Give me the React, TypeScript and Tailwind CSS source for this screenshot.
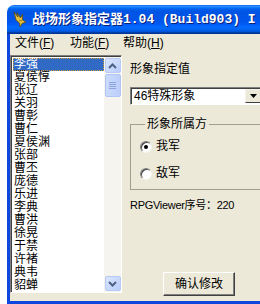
import React from "react";

const names = [
  "李强", "夏侯惇", "张辽", "关羽", "曹彰", "曹仁", "夏侯渊", "张部", "曹丕",
  "庞德", "乐进", "李典", "曹洪", "徐晃", "于禁", "许褚", "典韦", "貂蝉",
];

const ui = "font-['Liberation_Sans','Noto_Sans_CJK_SC',sans-serif]";

function Chevron({ down }: { down?: boolean }) {
  return (
    <svg width="9" height="6" viewBox="0 0 9 6">
      <polyline
        points={down ? "1,1 4.5,4.5 8,1" : "1,5 4.5,1.5 8,5"}
        fill="none"
        stroke="#4d6185"
        strokeWidth="2"
      />
    </svg>
  );
}

function Radio({ checked, label }: { checked?: boolean; label: string }) {
  return (
    <div className="flex items-center h-[13px]">
      <span className="w-[12px] h-[12px] rounded-full bg-white border border-t-[#7f7f7f] border-l-[#7f7f7f] border-r-[#f4f3ee] border-b-[#f4f3ee] shadow-[inset_1px_1px_0_#404040] flex items-center justify-center">
        {checked && <span className="w-[4px] h-[4px] rounded-full bg-black" />}
      </span>
      <span className="ml-[4px] text-[12px] leading-[13px] text-black">{label}</span>
    </div>
  );
}

export default function App() {
  return (
    <div className={`w-[260px] h-[304px] bg-white overflow-hidden ${ui}`}>
      <div className="ml-[7px] mt-[5px] w-[300px] flex flex-col">
        {/* title bar */}
        <div className="h-[29px] rounded-t-[7px] flex items-center pl-[6px] bg-[linear-gradient(#0058ee_0%,#3593ff_4%,#288eff_6%,#127dff_8%,#036ffc_10%,#0262ee_14%,#0057e5_20%,#0054e3_24%,#0055eb_56%,#005bf5_66%,#026afe_76%,#0062ef_86%,#0052d6_92%,#0040ab_94%,#003092_100%)]">
          <svg width="16" height="17" viewBox="0 0 16 17">
            <path
              d="M1 1 L5 6 L4 1.5 L7.5 7 L9.5 3 L9.5 9 L13 11 L9 12.5 L7 16 L6.5 12 L3 9 Z"
              fill="#e6c23c"
              stroke="#5b4a12"
              strokeWidth="0.8"
            />
            <path d="M6 9 L9 10" stroke="#7a6a20" strokeWidth="0.8" />
          </svg>
          <span className="ml-[3px] whitespace-nowrap text-white font-bold text-[13px] leading-[15px] font-['Liberation_Mono','Noto_Sans_CJK_SC',monospace] [text-shadow:1px_1px_0_#0a1f7a]">
            战场形象指定器1.04 (Build903) I
          </span>
        </div>

        {/* body */}
        <div className="bg-[#ece9d8] border-l-[3px] border-b-[3px] border-[#0d47dd] h-[270px]">
          {/* menu */}
          <div className="h-[18px] flex items-center pl-[5px] text-[12px] text-black">
            <span className="w-[55px]">文件(<u>F</u>)</span>
            <span className="w-[53px]">功能(<u>F</u>)</span>
            <span>帮助(<u>H</u>)</span>
          </div>

          <div className="flex mt-[3px]">
            {/* list box */}
            <div className="w-[112px] h-[238px] flex border border-t-[#7f7f7f] border-l-[#7f7f7f] border-r-white border-b-white shadow-[inset_1px_1px_0_#404040]">
              <div className="flex-1 bg-white mt-[1px] ml-[1px] pt-[1px] pl-[1px] overflow-hidden">
                {names.map((n, i) => (
                  <div
                    key={n}
                    className={`h-[13px] leading-[13px] text-[12px] pl-[1px] ${
                      i === 0
                        ? "bg-[#316ac5] text-white outline outline-1 outline-dotted outline-[#ce9a3a] -outline-offset-1"
                        : "text-black"
                    }`}
                  >
                    {n}
                  </div>
                ))}
              </div>
              {/* scrollbar */}
              <div className="w-[17px] mt-[1px] bg-[#f5f4ef] flex flex-col items-center">
                <div className="w-[16px] h-[15px] mt-[1px] rounded-[2px] border border-[#b6c9f4] bg-[linear-gradient(135deg,#dbe6fe,#b9cdfb)] flex items-center justify-center">
                  <Chevron />
                </div>
                <div className="w-[16px] h-[23px] mt-[1px] rounded-[2px] border border-[#b0c5f2] bg-[linear-gradient(90deg,#cbdafd,#bccffb)] flex flex-col items-center justify-center gap-[1px]">
                  <span className="w-[7px] h-[1px] bg-[#8ba4dc]" />
                  <span className="w-[7px] h-[1px] bg-[#8ba4dc]" />
                  <span className="w-[7px] h-[1px] bg-[#8ba4dc]" />
                  <span className="w-[7px] h-[1px] bg-[#8ba4dc]" />
                </div>
                <div className="flex-1" />
                <div className="w-[16px] h-[15px] mb-[1px] rounded-[2px] border border-[#b6c9f4] bg-[linear-gradient(135deg,#dbe6fe,#b9cdfb)] flex items-center justify-center">
                  <Chevron down />
                </div>
              </div>
            </div>

            {/* right panel */}
            <div className="ml-[8px] w-[150px] flex flex-col text-[12px] text-black">
              <div className="mt-[8px] h-[13px] leading-[13px]">形象指定值</div>

              <div className="mt-[11px] w-[133px] h-[18px] flex items-center bg-white border border-t-[#7f7f7f] border-l-[#7f7f7f] border-r-white border-b-white shadow-[inset_1px_1px_0_#404040]">
                <span className="flex-1 pl-[3px] leading-[13px]">46特殊形象</span>
                <span className="w-[16px] h-[14px] mr-[1px] bg-[#ece9d8] border border-t-[#f4f3ee] border-l-[#f4f3ee] border-r-[#404040] border-b-[#404040] flex items-center justify-center">
                  <svg width="7" height="4" viewBox="0 0 7 4">
                    <polygon points="0,0 7,0 3.5,4" fill="#000" />
                  </svg>
                </span>
              </div>

              <fieldset className="mt-[13px] w-[140px] h-[72px] border border-[#a09e92] pl-[9px]">
                <legend className="ml-[5px] px-[2px] leading-[13px]">形象所属方</legend>
                <div className="mt-[9px]">
                  <Radio checked label="我军" />
                </div>
                <div className="mt-[14px]">
                  <Radio label="敌军" />
                </div>
              </fieldset>

              <div className="mt-[9px] h-[13px] leading-[13px] text-[11px] tracking-[-0.3px] whitespace-nowrap">
                RPGViewer序号：220
              </div>

              <button className="ml-[33px] mt-[60px] w-[72px] h-[24px] bg-[#ece9d8] border border-t-white border-l-white border-r-[#404040] border-b-[#404040] shadow-[inset_-1px_-1px_0_#808080] text-[12px] text-black">
                确认修改
              </button>
            </div>
          </div>
        </div>
      </div>
    </div>
  );
}
